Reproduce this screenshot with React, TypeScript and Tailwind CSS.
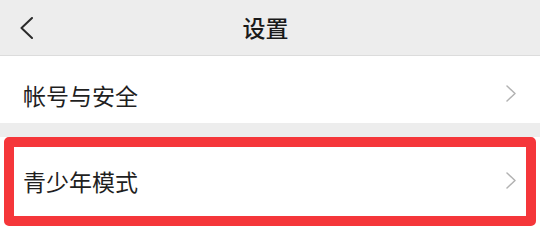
import React from "react";

const Chevron = ({ className }: { className: string }) => (
  <svg viewBox="0 0 10 17" className={className} fill="none">
    <path d="M1 1 L9 8.5 L1 16" stroke="currentColor" strokeWidth="1.5" strokeLinecap="round" strokeLinejoin="round" />
  </svg>
);

export default function App() {
  return (
    <div
      className="w-[540px] h-[232px] bg-white overflow-hidden flex flex-col text-[#1f1f1f]"
      style={{ fontFamily: '"Noto Sans CJK SC", "Noto Sans", sans-serif' }}
    >
      <div className="h-[56px] shrink-0 bg-[#ededed] border-b border-[#dcdcdc] grid grid-cols-[1fr_auto_1fr] items-center">
        <div className="pl-[20px] flex items-center">
          <svg viewBox="0 0 13 22" className="w-[13px] h-[22px] text-[#2a2a2a]" fill="none">
            <path d="M12 1 L1.5 11 L12 21" stroke="currentColor" strokeWidth="2" strokeLinecap="round" strokeLinejoin="round" />
          </svg>
        </div>
        <div className="text-[23px] font-medium leading-none pr-[9px] text-[#1a1a1a]">设置</div>
        <div />
      </div>
      <div className="h-[67px] shrink-0 bg-white flex items-center justify-between pl-[23px] pr-[24px] pt-[12px]">
        <span className="text-[23px] leading-none">帐号与安全</span>
        <Chevron className="w-[10px] h-[17px] text-[#b2b2b2] -mt-[5px]" />
      </div>
      <div className="h-[14px] shrink-0 bg-[#ededed]" />
      <div className="flex-1 bg-white pl-[4px] pr-[4px]">
        <div className="h-[89px] border-[10px] border-[#f5363a] rounded-[5px] flex items-center justify-between pl-[9px] pr-[10px]">
          <span className="text-[23px] leading-none">青少年模式</span>
          <Chevron className="w-[10px] h-[17px] text-[#b2b2b2] -mt-[2px]" />
        </div>
      </div>
    </div>
  );
}
